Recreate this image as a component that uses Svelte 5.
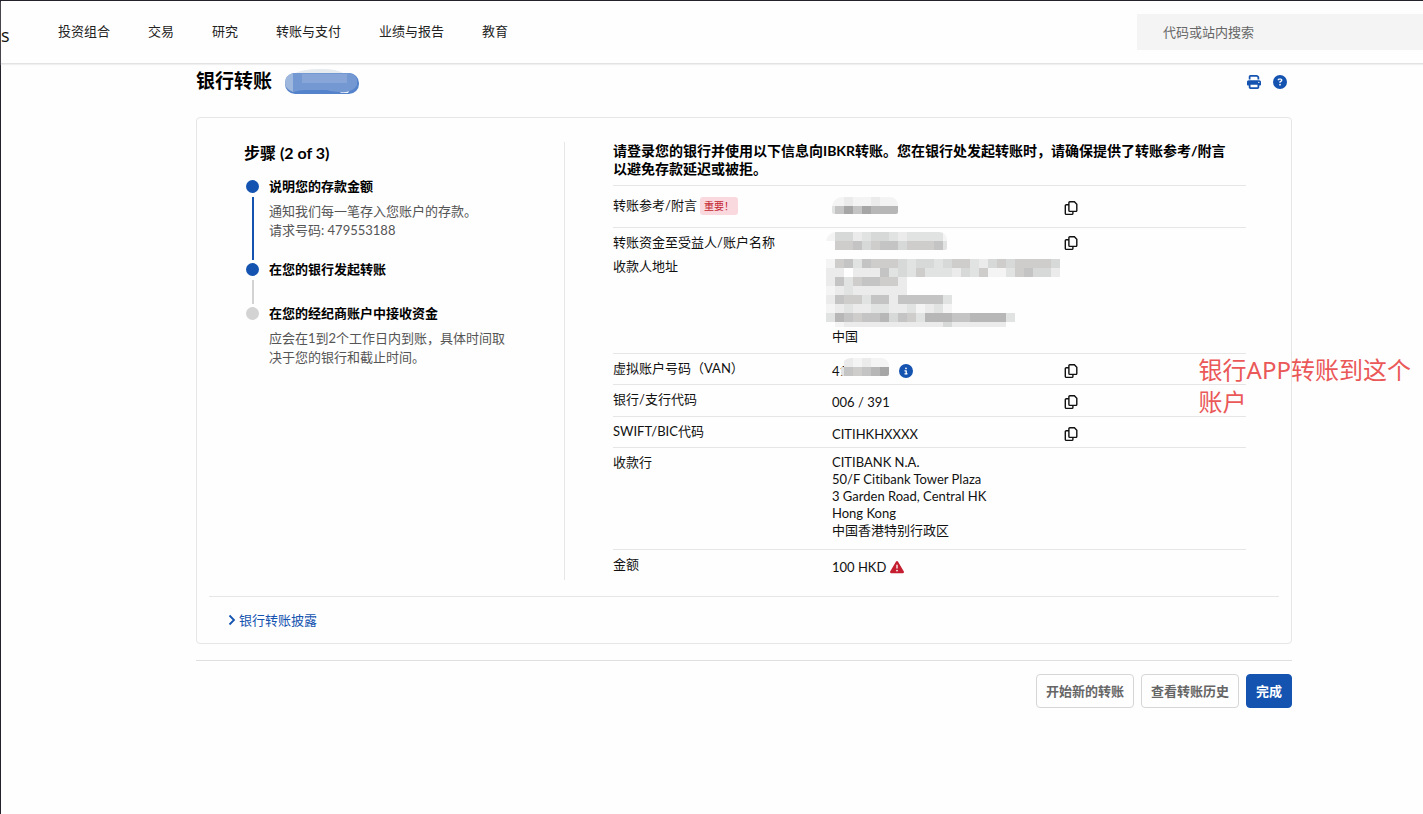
<script>
	const menu = ['投资组合', '交易', '研究', '转账与支付', '业绩与报告', '教育'];

	const steps = [
		{ title: '说明您的存款金额', lines: ['通知我们每一笔存入您账户的存款。', '请求号码: 479553188'], done: true, line: 'blue' },
		{ title: '在您的银行发起转账', lines: [], done: true, line: 'grey' },
		{ title: '在您的经纪商账户中接收资金', lines: ['应会在1到2个工作日内到账，具体时间取', '决于您的银行和截止时间。'], done: false, line: '' }
	];

	const bank = ['CITIBANK N.A.', '50/F Citibank Tower Plaza', '3 Garden Road, Central HK', 'Hong Kong', '中国香港特别行政区'];

	// one digit per 9px cell, from light to dark
	const greys = ['none', '#f4f4f4', '#ebebeb', '#e1e2e2', '#d7d9d8', '#cecdcc', '#c4c4c5', '#b7b7b7', '#a6a6a6'];
	const hidden = {
		reference: ['11211211', '36868777'],
		name: ['14423443233331', '05564566455563'],
		address: [
			'15636555434434553245455554',
			'22022263435333243511356442',
			'263566552',
			'123222222',
			'26553662666663',
			'12322332231231',
			'376566746537776677773',
			'01222222222224222222'
		],
		account: ['021211', '365678']
	};

	const icons = {
		print: 'M128 0C92.7 0 64 28.7 64 64v96h64V64H354.7L384 93.3V160h64V93.3c0-17-6.7-33.3-18.7-45.3L400 18.7C388 6.7 371.7 0 354.7 0H128zM384 352v32 64H128V384 368 352H384zm64 32h32c17.7 0 32-14.3 32-32V256c0-35.3-28.7-64-64-64H64c-35.3 0-64 28.7-64 64v96c0 17.7 14.3 32 32 32H64v64c0 35.3 28.7 64 64 64H384c35.3 0 64-28.7 64-64V384zM432 248a24 24 0 1 1 0 48 24 24 0 1 1 0-48z',
		help: 'M256 512A256 256 0 1 0 256 0a256 256 0 1 0 0 512zM169.8 165.3c7.9-22.3 29.1-37.3 52.8-37.3h58.3c34.9 0 63.1 28.3 63.1 63.1c0 22.6-12.1 43.5-31.7 54.8L280 264.4c-.2 13-10.9 23.6-24 23.6c-13.3 0-24-10.7-24-24V250.5c0-8.6 4.6-16.5 12.1-20.8l44.3-25.4c4.7-2.7 7.6-7.7 7.6-13.1c0-8.4-6.8-15.1-15.1-15.1H222.6c-3.4 0-6.4 2.1-7.5 5.3l-.4 1.2c-4.4 12.5-18.2 19-30.6 14.6s-19-18.2-14.6-30.6l.4-1.2zM224 352a32 32 0 1 1 64 0 32 32 0 1 1-64 0z',
		info: 'M256 512A256 256 0 1 0 256 0a256 256 0 1 0 0 512zM216 336h24V272H216c-13.3 0-24-10.7-24-24s10.7-24 24-24h48c13.3 0 24 10.7 24 24v88h8c13.3 0 24 10.7 24 24s-10.7 24-24 24H216c-13.3 0-24-10.7-24-24s10.7-24 24-24zm40-208a32 32 0 1 1 0 64 32 32 0 1 1 0-64z',
		warning: 'M256 32c14.2 0 27.3 7.5 34.5 19.8l216 368c7.3 12.4 7.3 27.7 .2 40.1S486.3 480 472 480H40c-14.3 0-27.6-7.7-34.7-20.1s-7-27.8 .2-40.1l216-368C228.7 39.5 241.8 32 256 32zm0 128c-13.3 0-24 10.7-24 24V296c0 13.3 10.7 24 24 24s24-10.7 24-24V184c0-13.3-10.7-24-24-24zm32 224a32 32 0 1 0 -64 0 32 32 0 1 0 64 0z'
	};
</script>

{#snippet icon(name)}
	<svg class="icon" viewBox="0 0 512 512" aria-hidden="true"><path d={icons[name]} /></svg>
{/snippet}

{#snippet copy()}
	<button class="plain copy" type="button" aria-label="复制">
		<svg viewBox="0 0 14 16" aria-hidden="true">
			<path d="M5.8 1.8h4.6l2.4 2.4v6.3a.9.9 0 0 1-.9.9H5.8a.9.9 0 0 1-.9-.9V2.7a.9.9 0 0 1 .9-.9zM4.6 4.8H2.3a1 1 0 0 0-1 1v7.6a1 1 0 0 0 1 1h5.6a1 1 0 0 0 1-1v-1.7" />
		</svg>
	</button>
{/snippet}

{#snippet mosaic(rows, name, width, height, start)}
	<svg class="mosaic {name}" viewBox="{start} 0 {width} {height}" {width} {height} shape-rendering="crispEdges" aria-hidden="true">
		{#each rows as row, y}
			{#each row as cell, x}
				<rect x={x * 9} y={y * 9} width="9" height="9" fill={greys[cell]} />
			{/each}
		{/each}
	</svg>
{/snippet}

<div class="page">
	<header>
		<span class="brand">s</span>
		<nav>
			{#each menu as item}
				<a href="#top">{item}</a>
			{/each}
		</nav>
		<input class="search" type="text" placeholder="代码或站内搜索" aria-label="代码或站内搜索" />
	</header>

	<main>
		<div class="title">
			<h1>银行转账</h1>
			<svg class="pill" viewBox="0 0 74 25" aria-hidden="true">
				<path d="M8 5Q18 0 34 0h4q14 0 22 5z" fill="#e6ebef" />
				<rect y="4" width="74" height="21" rx="10" fill="#5583cb" />
				<path d="M8 4h56q6 1 8 6v6q-3 6-12 7-12 0-18-2H20q-6 0-12 2z" fill="#7499d2" />
				<path d="M8 4Q0 6 0 14q0 6 8 9z" fill="#9eb7dc" />
				<path d="M17 5h45v9H17z" fill="#88a5d7" />
				<path d="M55 23q5 1 9-1l-1 2h-7z" fill="#eef3fa" />
			</svg>
			<div class="tools">
				<button class="plain" type="button" aria-label="打印">{@render icon('print')}</button>
				<button class="plain" type="button" aria-label="帮助">{@render icon('help')}</button>
			</div>
		</div>

		<section class="card">
			<div class="columns">
				<div class="steps">
					<h2>步骤 (2 of 3)</h2>
					<ol>
						{#each steps as step}
							<li>
								<div class="marker">
									<span class="dot" class:done={step.done}></span>
									{#if step.line}<span class="line {step.line}"></span>{/if}
								</div>
								<div class="text">
									<h3>{step.title}</h3>
									{#if step.lines.length}
										<p>{step.lines[0]}<br />{step.lines[1]}</p>
									{/if}
								</div>
							</li>
						{/each}
					</ol>
				</div>

				<div class="details">
					<p class="intro">请登录您的银行并使用以下信息向IBKR转账。您在银行处发起转账时，请确保提供了转账参考/附言<br />以避免存款延迟或被拒。</p>
					<table>
						<tbody>
							<tr class="reference">
								<th scope="row">转账参考/附言<span class="badge">重要！</span></th>
								<td>{@render mosaic(hidden.reference, 'round', 66, 17, 6)}</td>
								<td>{@render copy()}</td>
							</tr>
							<tr class="name">
								<th scope="row">转账资金至受益人/账户名称</th>
								<td>{@render mosaic(hidden.name, 'round out', 121, 18, 0)}</td>
								<td>{@render copy()}</td>
							</tr>
							<tr>
								<th scope="row">收款人地址</th>
								<td class="address">{@render mosaic(hidden.address, 'out', 234, 68, 0)}中国</td>
								<td></td>
							</tr>
							<tr>
								<th scope="row">虚拟账户号码（VAN）</th>
								<td>
									<div class="value">
										<span class="number">41{@render mosaic(hidden.account, 'round over', 48, 18, 6)}</span>
										<button class="plain" type="button" aria-label="说明">{@render icon('info')}</button>
									</div>
								</td>
								<td>{@render copy()}</td>
							</tr>
							<tr class="code">
								<th scope="row">银行/支行代码</th>
								<td>006 / 391</td>
								<td>{@render copy()}</td>
							</tr>
							<tr>
								<th scope="row">SWIFT/BIC代码</th>
								<td>CITIHKHXXXX</td>
								<td>{@render copy()}</td>
							</tr>
							<tr>
								<th scope="row">收款行</th>
								<td class="bank">
									{#each bank as line}
										<div>{line}</div>
									{/each}
								</td>
								<td></td>
							</tr>
							<tr class="last">
								<th scope="row">金额</th>
								<td><div class="value amount">100 HKD {@render icon('warning')}</div></td>
								<td></td>
							</tr>
						</tbody>
					</table>
				</div>
			</div>

			<div class="disclosure">
				<a href="#disclosure">
					<svg viewBox="0 0 8 12" aria-hidden="true"><path d="M1.5 1.5 6 6l-4.5 4.5" /></svg>
					银行转账披露
				</a>
			</div>
		</section>

		<footer>
			<button class="button" type="button">开始新的转账</button>
			<button class="button" type="button">查看转账历史</button>
			<button class="button primary" type="button">完成</button>
		</footer>
	</main>

	<div class="note">银行APP转账到这个<br />账户</div>
</div>

<style>
	:global(body) {
		background: #fefefe;
	}

	.page {
		position: relative;
		box-sizing: border-box;
		min-height: 100vh;
		border-top: solid 1px #23222c;
		border-left: solid 1px #23222c;
		color: #111;
		font: 13px/18px Lato, "Noto Sans CJK SC", sans-serif;
		font-variant-ligatures: none;
	}

	h1, h2, h3, p, ol {
		margin: 0;
		padding: 0;
	}

	header {
		display: flex;
		align-items: center;
		height: 62px;
		border-bottom: solid 1px #e3e3e3;
		box-shadow: 0 1px 1px #f0f0f0;
	}

	.brand {
		width: 57px;
		padding-top: 6px;
		font: 18px/24px "Open Sans", sans-serif;
	}

	nav {
		display: flex;
		flex: 1;
		gap: 38px;
		padding-bottom: 2px;
	}

	nav a {
		color: #222;
		text-decoration: none;
	}

	.search {
		box-sizing: border-box;
		width: 286px;
		height: 36px;
		padding: 0 26px;
		border: none;
		background: #f4f4f4;
		font: inherit;
	}

	.search::placeholder {
		color: #666;
		opacity: 1;
	}

	main {
		padding: 0 131px 0 195px;
	}

	.title {
		display: flex;
		align-items: center;
		height: 35px;
		margin-bottom: 18px;
	}

	h1 {
		padding-bottom: 2px;
		color: #000;
		font-size: 19px;
		line-height: 28px;
	}

	.pill {
		width: 74px;
		height: 25px;
		margin-left: 13px;
	}

	.tools {
		display: flex;
		gap: 12px;
		margin-left: auto;
		padding-right: 5px;
	}

	.plain {
		display: flex;
		padding: 0;
		border: none;
		background: none;
		color: #1453b0;
		cursor: pointer;
	}

	.icon {
		width: 14px;
		height: 14px;
		fill: currentColor;
	}

	.card {
		padding: 24px 12px 0;
		border: solid 1px #e6e6e6;
		border-radius: 4px;
	}

	.columns {
		display: grid;
		grid-template-columns: 356px 1fr;
		padding-bottom: 16px;
		border-bottom: solid 1px #e6e6e6;
	}

	.steps {
		padding-left: 35px;
		border-right: solid 1px #e6e6e6;
	}

	h2 {
		color: #000;
		font-size: 16px;
		line-height: 22px;
		margin-bottom: 13px;
	}

	li {
		display: flex;
		gap: 10px;
		padding-left: 2px;
	}

	.marker {
		display: flex;
		flex-direction: column;
		align-items: center;
		padding-top: 3px;
	}

	.dot {
		width: 13px;
		height: 13px;
		border-radius: 50%;
		background: #d3d3d3;
	}

	.dot.done, .line.blue {
		background: #1453b0;
	}

	.line {
		flex: 1;
		width: 2px;
		margin-top: 4px;
		background: #d3d3d3;
	}

	.text {
		box-sizing: border-box;
		min-height: 44px;
		padding-bottom: 20px;
	}

	h3 {
		color: #000;
		font-size: 13px;
		line-height: 18px;
	}

	.text p {
		margin-top: 7px;
		color: #555;
		line-height: 19px;
	}

	.details {
		padding: 0 33px 0 48px;
	}

	.intro {
		padding-bottom: 7px;
		border-bottom: solid 1px #e6e6e6;
		color: #000;
		font-size: 14px;
		font-weight: bold;
		white-space: nowrap;
	}

	table {
		width: 100%;
		border-spacing: 0;
		table-layout: fixed;
	}

	th, td {
		padding: 8px 0 4px;
		border-bottom: solid 1px #e6e6e6;
		vertical-align: top;
		text-align: left;
	}

	th {
		width: 219px;
		padding-top: 5px;
		font-weight: normal;
	}

	th + td {
		width: 232px;
	}

	.reference td {
		padding: 11px 0 10px;
	}

	.reference td:last-child {
		padding-top: 13px;
	}

	.reference th {
		padding-top: 10px;
	}

	.name th, .name td {
		padding: 5px 0 1px;
		border-bottom: none;
	}

	.name td {
		padding: 4px 0 0;
	}

	/* the icon hangs lower than its label */
	.name td:last-child {
		vertical-align: bottom;
		padding: 0;
	}

	.last th, .last td {
		border-bottom: none;
	}

	.code td {
		padding-bottom: 5px;
	}

	td.address {
		padding: 7px 0 8px;
	}

	td.bank {
		padding: 6px 0 10px;
		line-height: 17px;
	}

	.badge {
		display: inline-block;
		margin-left: 3px;
		padding: 0 4px;
		border-radius: 3px;
		background: #f9d9de;
		color: #c41e30;
		font-size: 10px;
	}

	.mosaic {
		display: block;
	}

	.mosaic.out {
		margin-left: -6px;
	}

	.mosaic.round {
		border-radius: 10px 8px 2px 2px;
	}

	.value {
		display: flex;
		align-items: center;
		gap: 10px;
	}

	.number {
		position: relative;
		width: 57px;
	}

	.mosaic.over {
		position: absolute;
		top: -4px;
		left: 9px;
	}

	.amount {
		gap: 4px;
	}

	.amount .icon {
		color: #c41e30;
	}

	.copy {
		align-items: center;
		height: 18px;
		color: #111;
	}

	.copy svg {
		width: 14px;
		height: 16px;
		fill: none;
		stroke: currentColor;
		stroke-width: 1.4;
	}

	.disclosure {
		padding: 14px 19px 13px;
	}

	.disclosure a {
		display: inline-flex;
		align-items: center;
		gap: 3px;
		color: #1453b0;
		text-decoration: none;
	}

	.disclosure svg {
		width: 8px;
		height: 12px;
		fill: none;
		stroke: currentColor;
		stroke-width: 1.8;
	}

	footer {
		display: flex;
		justify-content: flex-end;
		gap: 7px;
		margin-top: 16px;
		padding-top: 13px;
		border-top: solid 1px #e0e0e0;
	}

	.button {
		height: 34px;
		padding: 0 9px;
		border: solid 1px #d6d6d6;
		border-radius: 4px;
		background: #fefefe;
		color: #666;
		font: bold 13px/18px Lato, "Noto Sans CJK SC", sans-serif;
		cursor: pointer;
	}

	.primary {
		border-color: #1453b0;
		background: #1453b0;
		color: #fff;
	}

	/* annotation over the page */
	.note {
		position: absolute;
		top: 353px;
		right: 12px;
		color: #ea5858;
		font: 24px/32px "Noto Sans", "Noto Sans CJK SC", sans-serif;
	}
</style>
